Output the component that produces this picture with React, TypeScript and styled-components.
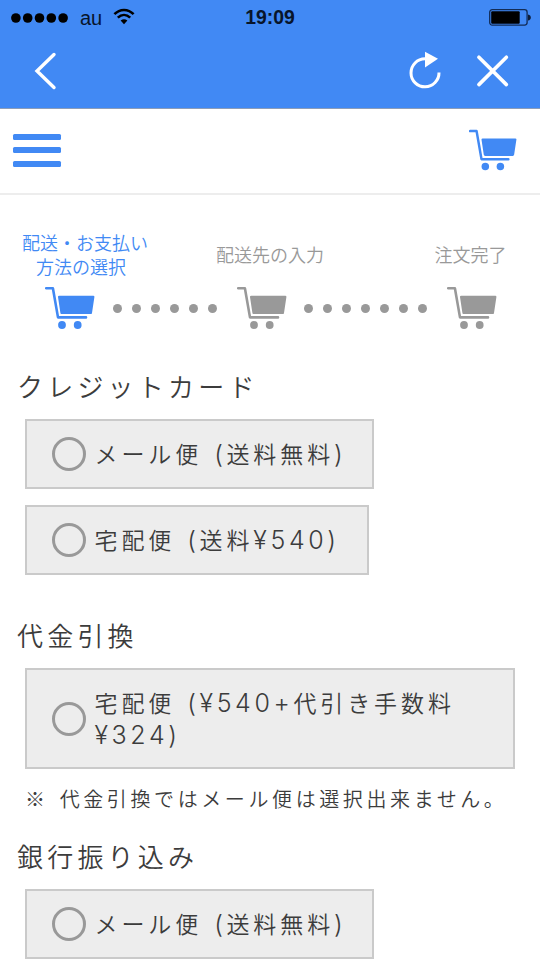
import React from 'react';
import styled, { createGlobalStyle } from 'styled-components';

const BLUE = '#4189f4';
const GRAY = '#999999';

const GlobalStyle = createGlobalStyle`
  *, *::before, *::after { box-sizing: border-box; }
  body { margin: 0; background: #fff; overflow: hidden; }
`;

const Page = styled.div`
  width: 540px;
  height: 960px;
  overflow: hidden;
  background: #fff;
  color: #3c3c3c;
  font-family: 'Noto Sans CJK JP DemiLight', 'Noto Sans CJK JP', sans-serif;
  font-weight: 350;
`;

const TopBar = styled.header`
  height: 109px;
  background: ${BLUE};
  border-bottom: 1px solid #8c9db8;
`;

const StatusBar = styled.div`
  display: grid;
  grid-template-columns: 1fr auto 1fr;
  align-items: center;
  height: 36px;
  padding: 0 9px 0 10px;
  color: #08152b;
  font-family: 'Liberation Sans', Arial, sans-serif;
`;

const Carrier = styled.div`
  display: flex;
  align-items: center;
  height: 34px;
  font-size: 20px;
  font-weight: 400;
  line-height: 34px;
`;

const Signal = styled.svg`
  display: block;
  margin: -1px 12px 0 1px;
`;

const Wifi = styled.svg`
  display: block;
  margin: -3px 0 0 11px;
`;

const Clock = styled.div`
  height: 34px;
  margin-left: -1px;
  font-size: 19.4px;
  font-weight: 700;
  line-height: 33px;
`;

const Battery = styled.svg`
  display: block;
  justify-self: end;
  margin-top: -2px;
`;

const NavBar = styled.nav`
  display: flex;
  align-items: center;
  height: 72px;
  padding: 0 31px 2px 34px;
`;

const NavButton = styled.button<{ $push?: boolean; $gap?: number }>`
  display: block;
  padding: 0;
  border: 0;
  background: none;
  line-height: 0;
  margin-left: ${(p) => (p.$push ? 'auto' : `${p.$gap ?? 0}px`)};
`;

const SiteHeader = styled.div`
  display: flex;
  justify-content: space-between;
  height: 86px;
  padding: 20px 23px 0 13px;
  border-bottom: 2px solid #ededed;
`;

const MenuButton = styled.div`
  display: flex;
  flex-direction: column;
  gap: 7.6px;
  padding-top: 4.5px;
`;

const MenuBar = styled.span`
  width: 48px;
  height: 6px;
  border-radius: 1.5px;
  background: ${BLUE};
`;

const StepLabels = styled.div`
  display: grid;
  grid-template-columns: 194px 218.5px 80px;
  align-items: center;
  height: 50px;
  margin-top: 34px;
  padding-left: 22px;
`;

const StepLabel = styled.div<{ $active?: boolean }>`
  justify-self: start;
  color: ${(p) => (p.$active ? BLUE : GRAY)};
  font-size: 18px;
  line-height: 24.5px;
  text-align: center;
  white-space: nowrap;
`;

const StepTrack = styled.div`
  display: flex;
  align-items: flex-start;
  height: 44px;
  margin-top: 7px;
  padding-left: 45px;
`;

const Dots = styled.div<{ $width: number }>`
  display: flex;
  justify-content: space-between;
  width: ${(p) => p.$width}px;
  margin: 17.5px 19px 0 17.5px;
`;

const Dot = styled.span`
  width: 9px;
  height: 9px;
  border-radius: 50%;
  background: ${GRAY};
`;

const Heading = styled.h2<{ $top: number }>`
  height: 40px;
  margin: ${(p) => p.$top}px 0 0 17px;
  font-size: 26px;
  font-weight: 350;
  line-height: 40px;
  letter-spacing: 4.2px;
  white-space: nowrap;
`;

const Option = styled.label<{ $width: number; $top: number; $height?: number }>`
  display: flex;
  align-items: center;
  width: ${(p) => p.$width}px;
  height: ${(p) => p.$height ?? 70}px;
  margin: ${(p) => p.$top}px 0 0 25px;
  padding-left: 25px;
  border: 2px solid #cacaca;
  background: #ededed;
`;

const Radio = styled.span`
  flex: none;
  width: 34px;
  height: 34px;
  margin-right: 8.5px;
  border: 3.5px solid ${GRAY};
  border-radius: 50%;
`;

const OptionText = styled.span`
  margin-top: -2px;
  font-size: 23px;
  line-height: 32px;
  letter-spacing: 3.9px;
  word-spacing: 3px;
  white-space: nowrap;
`;

const Latin = styled.span`
  font-family: Inter, sans-serif;
  font-size: 25px;
  font-weight: 300;
  line-height: 0;
  letter-spacing: 3.6px;
`;

const Note = styled.p`
  height: 30px;
  margin: 15px 0 0 25px;
  font-size: 20px;
  line-height: 30px;
  letter-spacing: 3.6px;
  word-spacing: 3px;
  white-space: nowrap;
`;

function Cart({ color, width = 50 }: { color: string; width?: number }) {
  return (
    <svg width={width} height={width * 0.88} viewBox="0 0 50 44" fill="none">
      <path d="M1.2 2.2H7.9L13 31.4H41" stroke={color} strokeWidth="2.6" strokeLinecap="round" strokeLinejoin="round" />
      <path d="M14.2 9.8H48.3Q49.6 9.8 49.4 11L47 26.9Q46.8 28.1 45.6 28.1H16.8Q15.6 28.1 15.4 26.9L13 11Q12.9 9.8 14.2 9.8Z" fill={color} />
      <circle cx="17" cy="39" r="3.9" fill={color} />
      <circle cx="32.7" cy="39" r="3.9" fill={color} />
    </svg>
  );
}

function DotRow({ count, width }: { count: number; width: number }) {
  return (
    <Dots $width={width}>
      {Array.from({ length: count }, (_, i) => (
        <Dot key={i} />
      ))}
    </Dots>
  );
}

export default function App() {
  return (
    <Page>
      <GlobalStyle />
      <TopBar>
        <StatusBar>
          <Carrier>
            <Signal width="57" height="10" viewBox="0 0 57 10" fill="#000">
              {[4.9, 16.7, 28.5, 40.3, 52.1].map((x) => (
                <circle key={x} cx={x} cy="5" r="4.8" />
              ))}
            </Signal>
            au
            <Wifi width="22" height="17" viewBox="0 0 22 17" fill="none" stroke="#000" strokeWidth="2.5">
              <path d="M1.4 6.2C6.8.5 15.2.5 20.6 6.2" />
              <path d="M4.8 9.7C8.5 6.1 13.5 6.1 17.2 9.7" />
              <path d="M7.6 12.6Q11 9.7 14.4 12.6L11 16.2Z" fill="#000" stroke="none" />
            </Wifi>
          </Carrier>
          <Clock>19:09</Clock>
          <Battery width="42" height="17" viewBox="0 0 42 17">
            <rect x="0.7" y="0.7" width="37.4" height="15.4" rx="2.5" fill="none" stroke="#122c57" strokeWidth="1.3" />
            <rect x="2.2" y="2.2" width="28.5" height="12.6" rx="1" fill="#000" />
            <path d="M39 5.5Q41.8 6 41.8 8.5T39 11.5Z" fill="#0c1c38" />
          </Battery>
        </StatusBar>
        <NavBar>
          <NavButton aria-label="戻る">
            <svg width="24" height="40" viewBox="0 0 24 40" fill="none" stroke="#fff" strokeWidth="3.4" strokeLinecap="round">
              <path d="M20 3.5L3 20L20 36.5" />
            </svg>
          </NavButton>
          <NavButton aria-label="再読み込み" $push>
            <svg width="32" height="40" viewBox="0 0 32 40">
              <path d="M30 21.5A14 14 0 1 1 16 7.8" fill="none" stroke="#fff" strokeWidth="3" />
              <path d="M16 0.8V16.4L29 7.8Z" fill="#fff" />
            </svg>
          </NavButton>
          <NavButton aria-label="閉じる" $gap={35}>
            <svg width="33" height="34" viewBox="0 0 33 34" stroke="#fff" strokeWidth="3.6" strokeLinecap="round">
              <path d="M2.9 3.2L30.4 30.6M30.4 3.2L2.9 30.6" />
            </svg>
          </NavButton>
        </NavBar>
      </TopBar>

      <SiteHeader>
        <MenuButton>
          <MenuBar />
          <MenuBar />
          <MenuBar />
        </MenuButton>
        <Cart color={BLUE} width={48} />
      </SiteHeader>

      <StepLabels>
        <StepLabel $active>
          配送・お支払い
          <br />
          方法の選択&nbsp;&nbsp;
        </StepLabel>
        <StepLabel>配送先の入力</StepLabel>
        <StepLabel>注文完了</StepLabel>
      </StepLabels>
      <StepTrack>
        <Cart color={BLUE} />
        <DotRow count={6} width={105} />
        <Cart color={GRAY} />
        <DotRow count={7} width={123.5} />
        <Cart color={GRAY} />
      </StepTrack>

      <Heading $top={36}>クレジットカード</Heading>
      <Option $width={349} $top={13}>
        <Radio />
        <OptionText>
          メール便 <Latin>(</Latin>送料無料<Latin>)</Latin>
        </OptionText>
      </Option>
      <Option $width={344} $top={16}>
        <Radio />
        <OptionText>
          宅配便 <Latin>(</Latin>送料<Latin>¥540)</Latin>
        </OptionText>
      </Option>

      <Heading $top={40}>代金引換</Heading>
      <Option $width={490} $top={13} $height={101}>
        <Radio />
        <OptionText>
          宅配便 <Latin>(¥540+</Latin>代引き手数料
          <br />
          <Latin>¥324)</Latin>
        </OptionText>
      </Option>
      <Note>※ 代金引換ではメール便は選択出来ません。</Note>

      <Heading $top={22}>銀行振り込み</Heading>
      <Option $width={349} $top={13}>
        <Radio />
        <OptionText>
          メール便 <Latin>(</Latin>送料無料<Latin>)</Latin>
        </OptionText>
      </Option>
    </Page>
  );
}
